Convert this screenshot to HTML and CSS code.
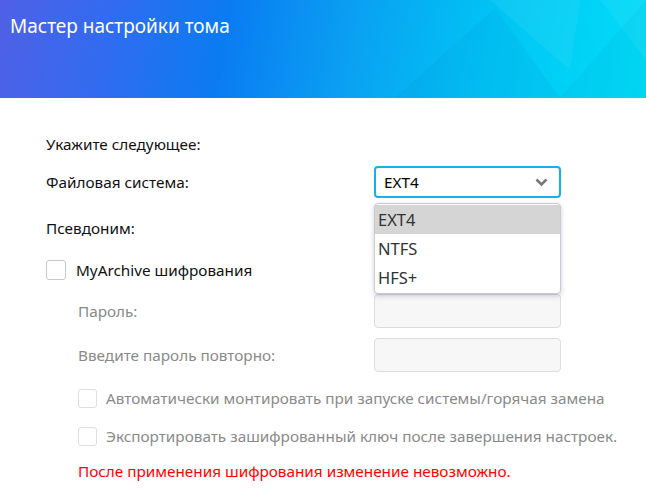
FILE: index.html
```html
<!DOCTYPE html>
<html lang="ru">
<head>
<meta charset="utf-8">
<link rel="stylesheet" href="styles.css">
</head>
<body>
<div class="header">
  <svg class="header-art" width="646" height="98" viewBox="0 0 646 98" preserveAspectRatio="none">
    <polygon points="395,98 495,8 560,98" fill="#0a8fd8" opacity="0.12"/>
    <polygon points="490,0 580,0 570,70" fill="#ffffff" opacity="0.06"/>
    <polygon points="560,98 646,0 646,98" fill="#0aa0d0" opacity="0.12"/>
    <polygon points="600,0 646,0 646,60" fill="#ffffff" opacity="0.05"/>
  </svg>
  <h1 class="title">Мастер настройки тома</h1>
</div>
<div class="content">
  <div class="row row-heading">Укажите следующее:</div>
  <div class="row row-fs">
    <span class="label">Файловая система:</span>
    <div class="select-wrap">
      <div class="select">
        <span>EXT4</span>
        <svg class="chevron" width="13" height="9" viewBox="0 0 13 9"><path d="M1.5 1.5 L6.5 6.5 L11.5 1.5" fill="none" stroke="#777" stroke-width="2.6"/></svg>
      </div>
      <ul class="dropdown">
        <li class="active">EXT4</li>
        <li>NTFS</li>
        <li>HFS+</li>
      </ul>
    </div>
  </div>
  <div class="row row-alias">
    <span class="label">Псевдоним:</span>
  </div>
  <div class="row row-enc">
    <span class="checkbox"></span>
    <span class="label">MyArchive шифрования</span>
  </div>
  <div class="row row-pass indent">
    <span class="label muted">Пароль:</span>
    <div class="input"></div>
  </div>
  <div class="row row-pass2 indent">
    <span class="label muted">Введите пароль повторно:</span>
    <div class="input"></div>
  </div>
  <div class="row row-cb1 indent">
    <span class="checkbox small"></span>
    <span class="label muted">Автоматически монтировать при запуске системы/горячая замена</span>
  </div>
  <div class="row row-cb2 indent">
    <span class="checkbox small"></span>
    <span class="label muted">Экспортировать зашифрованный ключ после завершения настроек.</span>
  </div>
  <div class="row row-warn indent">
    <span class="warn">После применения шифрования изменение невозможно.</span>
  </div>
</div>
</body>
</html>
```

FILE: styles.css
```css
* { box-sizing: border-box; }
html, body { margin: 0; padding: 0; }
body {
  width: 646px;
  height: 501px;
  overflow: hidden;
  background: #ffffff;
  font-family: "Noto Sans", "Open Sans", sans-serif;
  color: #111;
  font-size: 15.3px;
}
.header {
  position: relative;
  height: 98px;
  background: linear-gradient(100deg, #5060e6 0%, #2f6cf0 18%, #0a7cf2 35%, #0aa2f2 55%, #00c4f4 75%, #00def8 100%);
  overflow: hidden;
}
.header-art { position: absolute; left: 0; top: 0; }
.title {
  position: relative;
  margin: 0;
  padding: 12px 0 0 10px;
  font-weight: 400;
  font-size: 19px;
  line-height: 28px;
  color: #fff;
}
.content {
  padding: 32px 0 0 46px;
}
.row {
  display: flex;
  align-items: center;
}
.label { flex: 0 0 auto; }
.row-heading { height: 28px; }
.row-fs { height: 32px; margin-top: 8px; }
.row-fs .label { width: 328px; }
.row-alias { height: 32px; margin-top: 14px; }
.row-enc { height: 28px; margin-top: 12px; }
.row-pass { height: 34px; margin-top: 10px; }
.row-pass2 { height: 34px; margin-top: 10px; }
.row-cb1 { height: 28px; margin-top: 12px; }
.row-cb2 { height: 28px; margin-top: 10px; }
.row-warn { height: 28px; margin-top: 7px; }
.indent { padding-left: 32px; }
.indent .label { width: 296px; }
.row-cb1 .label, .row-cb2 .label { width: auto; }
.muted { color: #8a8a8a; }
.select-wrap { position: relative; }
.select {
  width: 187px;
  height: 32px;
  border: 2px solid #16b1e6;
  border-radius: 4px;
  display: flex;
  align-items: center;
  justify-content: space-between;
  padding: 0 11px 0 8px;
  background: #fff;
  color: #000;
}
.chevron { display: block; }
.dropdown {
  position: absolute;
  left: 0;
  top: 37px;
  width: 187px;
  margin: 0;
  padding: 1px 0;
  list-style: none;
  background: #fff;
  border: 1px solid #c9c9d2;
  border-radius: 4px;
  box-shadow: 0 2px 5px rgba(60, 60, 120, 0.25);
  z-index: 2;
}
.dropdown li {
  height: 29px;
  line-height: 29px;
  padding-left: 3px;
  font-size: 16.5px;
  color: #333;
}
.dropdown li.active { background: #d5d5d5; }
.checkbox {
  width: 20px;
  height: 20px;
  border: 1px solid #c8c8c8;
  border-radius: 3px;
  background: #fff;
  margin-right: 10px;
  flex: 0 0 auto;
}
.checkbox.small { width: 19px; height: 19px; border-color: #dedede; margin-right: 9px; }
.input {
  width: 187px;
  height: 34px;
  border: 1px solid #dcdcdc;
  border-radius: 4px;
  background: #f7f7f7;
}
.warn { color: #ff0000; }
```
